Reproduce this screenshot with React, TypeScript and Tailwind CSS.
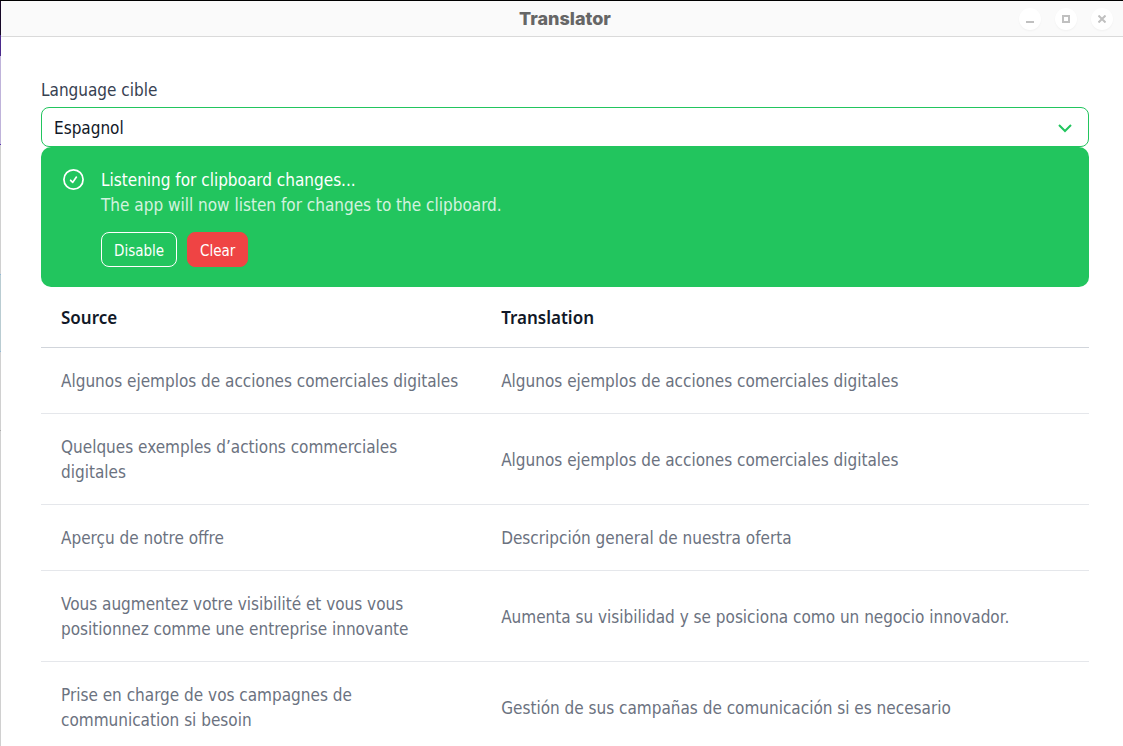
import { useState } from 'react';

const rows = [
  ['Algunos ejemplos de acciones comerciales digitales', 'Algunos ejemplos de acciones comerciales digitales'],
  ['Quelques exemples d’actions commerciales digitales', 'Algunos ejemplos de acciones comerciales digitales'],
  ['Aperçu de notre offre', 'Descripción general de nuestra oferta'],
  ['Vous augmentez votre visibilité et vous vous positionnez comme une entreprise innovante', 'Aumenta su visibilidad y se posiciona como un negocio innovador.'],
  ['Prise en charge de vos campagnes de communication si besoin', 'Gestión de sus campañas de comunicación si es necesario'],
];

const windowButton =
  'flex size-[22px] items-center justify-center rounded-full bg-white text-[#c0c0c0] shadow-[0_1px_2px_rgba(0,0,0,0.04)]';

function TitleBar() {
  return (
    <header className="grid h-9 grid-cols-[1fr_auto_1fr] items-center border-b border-[#dadada] bg-[#fafafa] pr-2.5">
      <h1 className="col-start-2 pl-4 font-['Inter',sans-serif] text-[18px] leading-6 font-extrabold text-[#666666]">Translator</h1>
      <div className="flex justify-end gap-3.5">
        <button aria-label="Minimize" className={windowButton}>
          <svg width="8" height="8" viewBox="0 0 8 8" fill="currentColor" shapeRendering="crispEdges">
            <path d="M0 6h8v2H0z" />
          </svg>
        </button>
        <button aria-label="Maximize" className={windowButton}>
          <svg width="8" height="8" viewBox="0 0 8 8" fill="none" stroke="currentColor" strokeWidth="2">
            <path d="M1 1h6v6H1z" />
          </svg>
        </button>
        <button aria-label="Close" className={windowButton}>
          <svg width="8" height="8" viewBox="0 0 8 8" fill="none" stroke="currentColor" strokeWidth="2">
            <path d="M.5.5l7 7M7.5.5l-7 7" />
          </svg>
        </button>
      </div>
    </header>
  );
}

function DesktopEdge() {
  return (
    <div aria-hidden="true" className="flex w-px shrink-0 flex-col bg-[#d0d0d0]">
      <div className="h-[34px] bg-[#160826]" />
      <div className="h-[21px] bg-[#4b2a8c]" />
      <div className="h-[88px] bg-[#bfb3da]" />
      <div className="h-px bg-[#5a35b0]" />
      <div className="h-[129px]" />
      <div className="h-[78px] border-y border-[#90b8d8] bg-[#b9ccd2]" />
      <div className="h-[78px]" />
      <div className="h-px bg-[#ababab]" />
    </div>
  );
}

export default function App() {
  const [listening, setListening] = useState(true);
  const [entries, setEntries] = useState(rows);

  return (
    <div className="flex h-screen overflow-hidden border-t border-black bg-white font-['DejaVu_Sans_Condensed','Noto_Sans',sans-serif] text-[17px] leading-[25px]">
      <DesktopEdge />
      <div className="flex min-w-0 flex-1 flex-col">
        <TitleBar />
        <main className="min-h-0 flex-1 overflow-hidden pt-[41px] pr-[34px] pl-10">
          <label htmlFor="language" className="mb-1 block text-[#374151]">
            Language cible
          </label>
          <div className="grid items-center">
            <select
              id="language"
              defaultValue="es"
              className="col-start-1 row-start-1 h-10 w-full appearance-none rounded-lg border border-[#22c55e] bg-white px-3 pt-0.5 text-[#111827]"
            >
              <option value="es">Espagnol</option>
              <option value="en">Anglais</option>
              <option value="fr">Français</option>
            </select>
            <svg className="pointer-events-none col-start-1 row-start-1 mr-3.5 size-5 justify-self-end text-[#22c55e]" viewBox="0 0 20 20" fill="none" stroke="currentColor" strokeWidth="2">
              <path d="M4 8l6 6 6-6" />
            </svg>
          </div>

          <section className="flex gap-4 rounded-[10px] bg-[#22c55e] px-5 pt-[21px] pb-5 text-white">
            <svg className="ml-px size-[23px] shrink-0" viewBox="0 0 24 24" fill="none" stroke="currentColor" strokeWidth="1.8" strokeLinecap="round" strokeLinejoin="round">
              <circle cx="12" cy="12" r="10" />
              <path d="M9 12.8l2.2 2.2L15 9.5" />
            </svg>
            <div>
              <h2 className="font-medium">{listening ? 'Listening for clipboard changes...' : 'Clipboard paused'}</h2>
              <p className="opacity-80">The app will now listen for changes to the clipboard.</p>
              <div className="mt-3.5 flex gap-2.5 text-[15px] leading-[21px]">
                <button onClick={() => setListening(!listening)} className="h-[35px] rounded-lg border border-white px-3 pt-[3px]">
                  Disable
                </button>
                <button onClick={() => setEntries([])} className="h-[35px] rounded-lg border border-[#ef4444] bg-[#ef4444] px-3 pt-[3px]">
                  Clear
                </button>
              </div>
            </div>
          </section>

          <table className="w-full table-fixed text-left">
            <thead>
              <tr className="border-b border-[#d1d5db] font-['Noto_Sans',sans-serif] text-[#111827]">
                <th className="w-[42%] px-5 pt-[18px] pb-[17px] font-semibold">Source</th>
                <th className="px-5 pt-[18px] pb-[17px] font-semibold">Translation</th>
              </tr>
            </thead>
            <tbody>
              {entries.map(([source, translation]) => (
                <tr key={source} className="border-b border-[#e5e7eb] text-[#6b7280]">
                  <td className="px-5 pt-[21px] pb-[19px]">{source}</td>
                  <td className="px-5 pt-[21px] pb-[19px]">{translation}</td>
                </tr>
              ))}
            </tbody>
          </table>
        </main>
      </div>
    </div>
  );
}
